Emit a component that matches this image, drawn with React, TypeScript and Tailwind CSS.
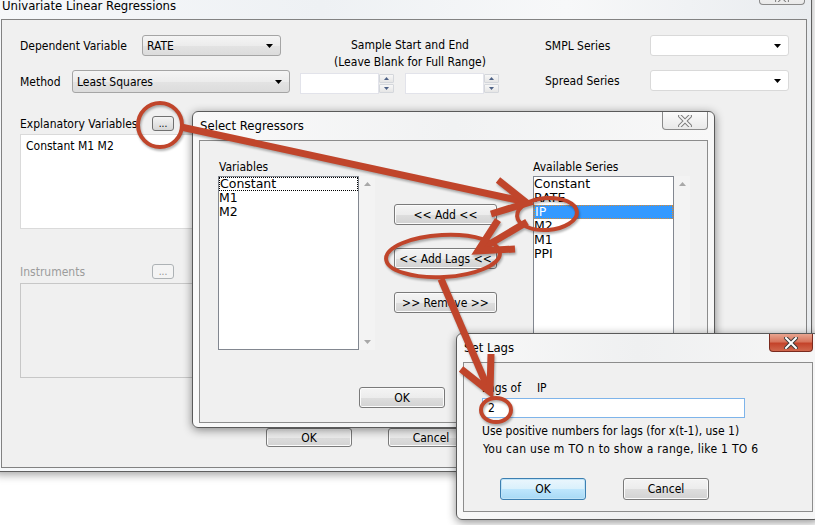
import type { ReactNode } from 'react';

const RED = '#c0452b';

function DownTri() {
  return (
    <svg width="7" height="4" viewBox="0 0 7 4">
      <path d="M0 0h7L3.5 4z" fill="#000" />
    </svg>
  );
}

function Combo({ className = '', text = '', plain = false }: { className?: string; text?: string; plain?: boolean }) {
  return (
    <div
      className={`flex items-center justify-between rounded-[3px] border pl-[4px] pr-[7px] ${
        plain
          ? 'border-[#d9d9d9] bg-white'
          : 'border-[#a5a5a5] bg-[linear-gradient(#f5f5f5_0%,#ececec_50%,#e3e3e3_51%,#dcdcdc_100%)]'
      } ${className}`}
    >
      <span>{text}</span>
      <DownTri />
    </div>
  );
}

function Btn({ className = '', children, def = false }: { className?: string; children: ReactNode; def?: boolean }) {
  return (
    <div
      className={`flex items-center justify-center rounded-[3px] border ${
        def
          ? 'border-[#3c7fb1] bg-[linear-gradient(#eaf6fd_0%,#d9f0fc_50%,#bee6fd_51%,#a7d9f5_100%)] shadow-[inset_0_0_0_1px_#bfe3f7]'
          : 'border-[#7a7a7a] bg-[linear-gradient(#f4f4f4_0%,#ececec_50%,#dedede_51%,#d2d2d2_100%)] shadow-[inset_0_0_0_1px_#fbfbfb]'
      } ${className}`}
    >
      {children}
    </div>
  );
}

function DotBtn({ disabled = false }: { disabled?: boolean }) {
  return (
    <div
      className={`flex h-[15px] w-[22px] items-end justify-center rounded-[3px] border pb-[1px] text-[10px] leading-[10px] ${
        disabled ? 'border-[#adb2b5] bg-[#f4f4f4] text-[#8d8d8d]' : 'border-[#707070] bg-[linear-gradient(#f4f4f4,#d6d6d6)]'
      }`}
    >
      ...
    </div>
  );
}

function Spin() {
  return (
    <div className="flex h-[21px]">
      <div className="w-[79px] border border-[#e2e3ea] bg-white" />
      <div className="flex w-[15px] flex-col justify-between py-[1px]">
        {[0, 1].map((i) => (
          <div key={i} className="flex h-[9px] items-center justify-center rounded-[1px] border border-[#d4d7dc] bg-[linear-gradient(#f7f7f7,#e6e6e6)]">
            <svg width="5" height="3" viewBox="0 0 5 3">
              <path d={i === 0 ? 'M0 3h5L2.5 0z' : 'M0 0h5L2.5 3z'} fill="#4d6185" />
            </svg>
          </div>
        ))}
      </div>
    </div>
  );
}

function ListBox({ items, sel = -1, focus = -1 }: { items: string[]; sel?: number; focus?: number }) {
  return (
    <div className="flex h-[174px]">
      <div className="w-[141px] border border-[#828790] bg-white font-['DejaVu_Sans',sans-serif] text-[12.5px] leading-[14px]">
        {items.map((t, i) => (
          <div
            key={t}
            className={`h-[14px] ${i === sel ? 'border border-dotted border-[#e08a2c] bg-[#3399ff] leading-[12px] text-white' : ''} ${
              i === focus ? 'border border-dotted border-black leading-[12px]' : ''
            }`}
          >
            {t}
          </div>
        ))}
      </div>
      <div className="flex w-[16px] flex-col items-center justify-between bg-[#f3f3f3] py-[6px]">
        <svg width="7" height="4" viewBox="0 0 7 4">
          <path d="M0 4h7L3.5 0z" fill="#a8a8a8" />
        </svg>
        <svg width="7" height="4" viewBox="0 0 7 4">
          <path d="M0 0h7L3.5 4z" fill="#a8a8a8" />
        </svg>
      </div>
    </div>
  );
}

function CloseX({ red = false }: { red?: boolean }) {
  return (
    <div
      className={`flex h-[18px] items-center justify-center rounded-b-[4px] border border-t-0 ${
        red
          ? 'w-[44px] border-[#7a2a1e] bg-[linear-gradient(#e8a590_0%,#d7745c_45%,#c4432a_55%,#d0674d_100%)]'
          : 'w-[46px] border-[#8a8a8a] bg-[linear-gradient(#fbfbfb,#e9e9e9)]'
      }`}
    >
      <svg width="14" height="12" viewBox="0 0 14 12">
        <path d="M2 1l10 10M12 1L2 11" stroke={red ? '#3b3b3b' : '#7c7c7c'} strokeWidth="4" strokeLinecap="square" />
        <path d="M2 1l10 10M12 1L2 11" stroke={red ? '#ffffff' : '#f4f4f4'} strokeWidth="2" strokeLinecap="square" />
      </svg>
    </div>
  );
}

function Overlay() {
  const head = (tip: [number, number], a: [number, number], b: [number, number]) =>
    `${a[0]},${a[1]} ${tip[0]},${tip[1]} ${b[0]},${b[1]}`;
  return (
    <svg className="pointer-events-none absolute left-0 top-0 drop-shadow-[1px_2px_1px_rgba(0,0,0,0.3)]" width="815" height="525" viewBox="0 0 815 525">
      <g fill="none" stroke={RED}>
        <ellipse cx="160" cy="125" rx="22" ry="22" strokeWidth="4" />
        <ellipse cx="547" cy="214" rx="30" ry="16" strokeWidth="4" transform="rotate(-4 547 214)" />
        <ellipse cx="443" cy="256" rx="57" ry="21" strokeWidth="4" transform="rotate(-3 443 256)" />
        <ellipse cx="496" cy="410" rx="15" ry="12" strokeWidth="4" />

        <line x1="181" y1="127" x2="522" y2="201" strokeWidth="7" />
        <polyline points={head([527, 203], [498, 180], [491, 214])} strokeWidth="7" strokeLinejoin="miter" />

        <line x1="527" y1="222" x2="483" y2="248" strokeWidth="7" />
        <polyline points={head([478, 251], [498, 220], [515, 249])} strokeWidth="7" strokeLinejoin="miter" />

        <line x1="441" y1="279" x2="487" y2="386" strokeWidth="7" />
        <polyline points={head([490, 392], [491, 354], [461, 369])} strokeWidth="7" strokeLinejoin="miter" />
      </g>
    </svg>
  );
}

export default function App() {
  return (
    <div className="relative h-[525px] w-[815px] overflow-hidden bg-white font-['DejaVu_Sans_Condensed','DejaVu_Sans',sans-serif] text-[12px] text-black">
      {/* main window */}
      <div className="absolute left-[-7px] top-[-14px] h-[486px] w-[819px] rounded-[6px] border border-[#5f5f5f] bg-[linear-gradient(90deg,#f6f8fa,#eef1f4_40%,#f7f8f9_70%,#e9ecef)] shadow-[0_3px_8px_rgba(0,0,0,0.35)]">
        <div className="flex h-[32px] items-start justify-between pl-[8px] pr-[6px]">
          <span className="pt-[11px] text-[13px] leading-[16px]">Univariate Linear Regressions</span>
          <CloseX />
        </div>
        <div className="ml-[7px] h-[449px] w-[806px] border border-[#828282] bg-[#f0f0f0] pl-[18px] pt-[15px]">
          <div className="flex items-start">
            <div className="w-[271px]">
              <div className="flex h-[21px] items-center">
                <span className="w-[122px]">Dependent Variable</span>
                <Combo className="h-[21px] w-[139px]" text="RATE" />
              </div>
              <div className="mt-[14px] flex h-[23px] items-center">
                <span className="w-[52px]">Method</span>
                <Combo className="h-[23px] w-[218px]" text="Least Squares" />
              </div>
            </div>
            <div className="ml-[9px] w-[220px]">
              <div className="mt-[2px] text-center leading-[17px]">
                <div>Sample Start and End</div>
                <div>(Leave Blank for Full Range)</div>
              </div>
              <div className="mt-[2px] flex gap-[11px]">
                <Spin />
                <Spin />
              </div>
            </div>
            <div className="ml-[25px]">
              <div className="flex h-[21px] items-center">
                <span className="w-[105px]">SMPL Series</span>
                <Combo plain className="h-[21px] w-[139px]" />
              </div>
              <div className="mt-[14px] flex h-[21px] items-center">
                <span className="w-[105px]">Spread Series</span>
                <Combo plain className="h-[21px] w-[139px]" />
              </div>
            </div>
          </div>

          <div className="mt-[22px] flex h-[15px] items-center">
            <span className="w-[132px]">Explanatory Variables</span>
            <DotBtn />
          </div>
          <div className="mt-[3px] h-[95px] w-[272px] border border-[#dadada] bg-white px-[5px] pt-[2px]">Constant M1 M2</div>

          <div className="mt-[35px] flex h-[15px] items-center">
            <span className="w-[132px] text-[#9c9c9c]">Instruments</span>
            <DotBtn disabled />
          </div>
          <div className="mt-[4px] h-[95px] w-[272px] border border-[#c7c7c7] bg-[#f0f0f0]" />

          <div className="mt-[50px] flex pl-[246px]">
            <Btn className="h-[19px] w-[86px]">OK</Btn>
            <Btn className="ml-[36px] h-[19px] w-[86px]">Cancel</Btn>
          </div>
        </div>
      </div>

      {/* Select Regressors dialog */}
      <div className="absolute left-[192px] top-[111px] h-[317px] w-[523px] rounded-[6px] border border-[#5a5a5a] bg-[linear-gradient(90deg,#f9f9f9,#f1f2f3_50%,#f8f8f8)] shadow-[0_2px_10px_rgba(0,0,0,0.45)]">
        <div className="relative flex h-[28px] items-center pl-[7px] text-[13px]">
          Select Regressors
          <div className="absolute right-[6px] top-0">
            <CloseX />
          </div>
        </div>
        <div className="mx-[6px] h-[283px] border border-[#8c8c8c] bg-[#f0f0f0] pl-[18px] pt-[19px]">
          <div className="flex">
            <div>
              <div className="pl-[1px] leading-[14px]">Variables</div>
              <div className="mt-[2px]">
                <ListBox items={['Constant', 'M1', 'M2']} focus={0} />
              </div>
            </div>
            <div className="ml-[19px] flex flex-col gap-[23px] pt-[44px]">
              <Btn className="h-[21px] w-[103px]">&lt;&lt; Add &lt;&lt;</Btn>
              <Btn className="h-[21px] w-[103px]">&lt;&lt; Add Lags &lt;&lt;</Btn>
              <Btn className="h-[21px] w-[103px]">&gt;&gt; Remove &gt;&gt;</Btn>
            </div>
            <div className="ml-[36px]">
              <div className="leading-[14px]">Available Series</div>
              <div className="mt-[2px]">
                <ListBox items={['Constant', 'RATE', 'IP', 'M2', 'M1', 'PPI']} sel={2} />
              </div>
            </div>
          </div>
          <div className="mt-[37px] pl-[141px]">
            <Btn className="h-[21px] w-[86px]">OK</Btn>
          </div>
        </div>
      </div>

      {/* Set Lags dialog */}
      <div className="absolute left-[456px] top-[333px] h-[187px] w-[364px] rounded-[6px] border border-[#5a5a5a] bg-[linear-gradient(90deg,#f8f8f8,#eff0f1_50%,#f6f6f6)] shadow-[0_2px_10px_rgba(0,0,0,0.45)]">
        <div className="relative flex h-[28px] items-center pl-[7px] text-[13px]">
          Set Lags
          <div className="absolute right-[6px] top-0">
            <CloseX red />
          </div>
        </div>
        <div className="mx-[6px] h-[150px] border border-[#8c8c8c] bg-[#f0f0f0] pl-[18px] pt-[18px]">
          <div className="flex leading-[14px]">
            <span>Lags of</span>
            <span className="ml-[16px]">IP</span>
          </div>
          <div className="mt-[3px] flex h-[20px] w-[263px] items-center border border-[#7eb4ea] bg-white px-[5px]">2</div>
          <div className="mt-[4px] leading-[18px]">
            <div>Use positive numbers for lags (for x(t-1), use 1)</div>
            <div className="pl-[1px] tracking-[0.3px]">You can use m TO n to show a range, like 1 TO 6</div>
          </div>
          <div className="mt-[20px] flex pl-[18px]">
            <Btn def className="h-[22px] w-[86px]">OK</Btn>
            <Btn className="ml-[37px] h-[22px] w-[86px]">Cancel</Btn>
          </div>
        </div>
      </div>

      <Overlay />
    </div>
  );
}
